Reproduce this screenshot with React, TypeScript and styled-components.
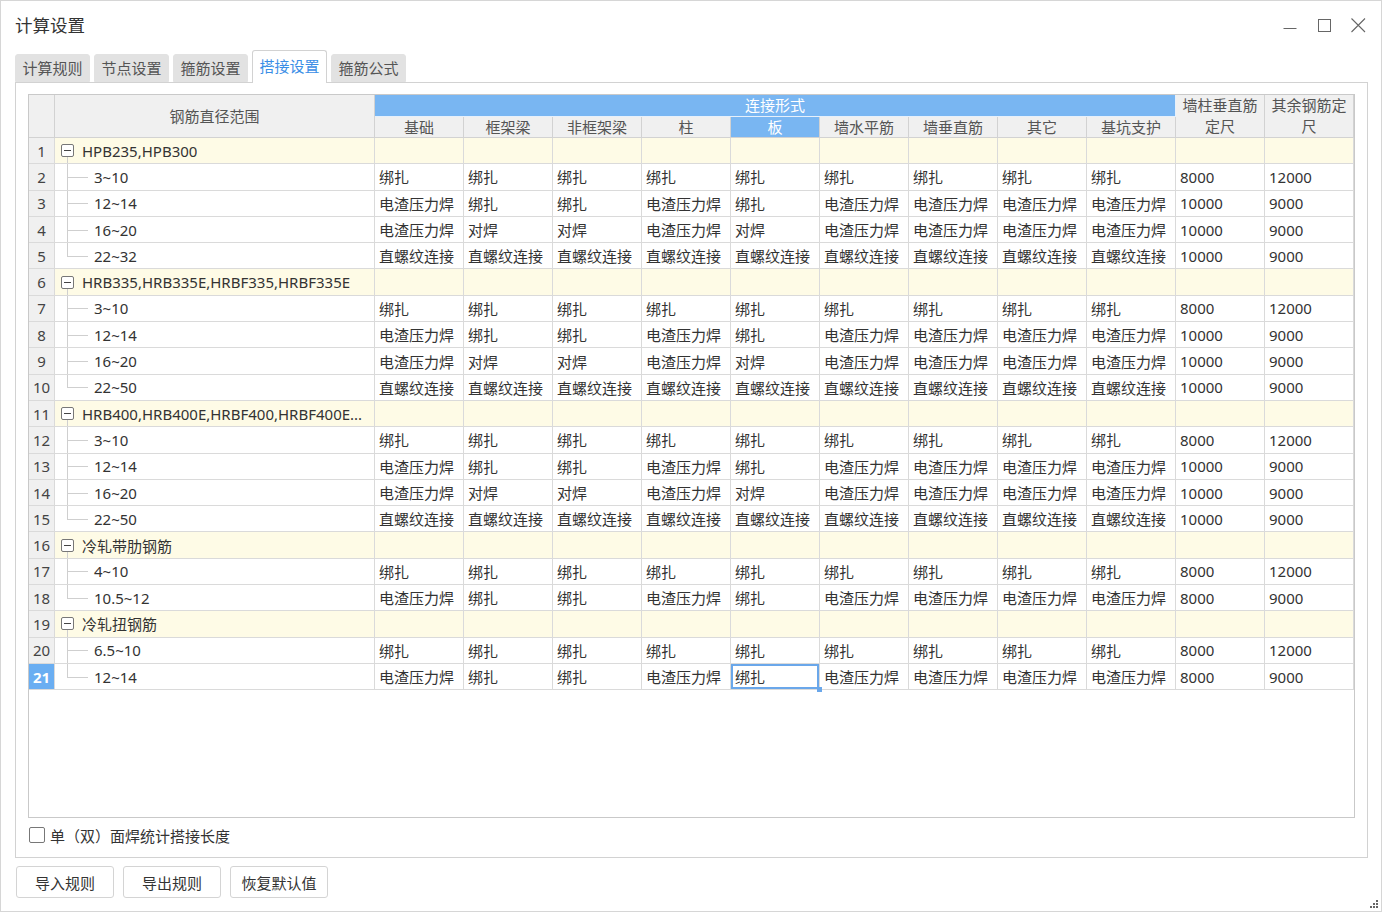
import React from 'react';
import styled, { createGlobalStyle, css } from 'styled-components';

const GlobalStyle = createGlobalStyle`
  html, body { margin: 0; padding: 0; background: #fff; }
  body {
    font-family: "Noto Sans", "Noto Sans CJK SC", sans-serif;
    color: #333;
  }
  * { box-sizing: border-box; }
`;

const B = '绑扎';
const E = '电渣压力焊';
const D = '对焊';
const Z = '直螺纹连接';

const patterns: Record<string, string[]> = {
  A: [B, B, B, B, B, B, B, B, B],
  B: [E, B, B, E, B, E, E, E, E],
  C: [E, D, D, E, D, E, E, E, E],
  D: [Z, Z, Z, Z, Z, Z, Z, Z, Z],
};

type Item = [string, string, string, string];

const groups: { name: string; items: Item[] }[] = [
  {
    name: 'HPB235,HPB300',
    items: [
      ['3~10', 'A', '8000', '12000'],
      ['12~14', 'B', '10000', '9000'],
      ['16~20', 'C', '10000', '9000'],
      ['22~32', 'D', '10000', '9000'],
    ],
  },
  {
    name: 'HRB335,HRB335E,HRBF335,HRBF335E',
    items: [
      ['3~10', 'A', '8000', '12000'],
      ['12~14', 'B', '10000', '9000'],
      ['16~20', 'C', '10000', '9000'],
      ['22~50', 'D', '10000', '9000'],
    ],
  },
  {
    name: 'HRB400,HRB400E,HRBF400,HRBF400E...',
    items: [
      ['3~10', 'A', '8000', '12000'],
      ['12~14', 'B', '10000', '9000'],
      ['16~20', 'C', '10000', '9000'],
      ['22~50', 'D', '10000', '9000'],
    ],
  },
  {
    name: '冷轧带肋钢筋',
    items: [
      ['4~10', 'A', '8000', '12000'],
      ['10.5~12', 'B', '8000', '9000'],
    ],
  },
  {
    name: '冷轧扭钢筋',
    items: [
      ['6.5~10', 'A', '8000', '12000'],
      ['12~14', 'B', '8000', '9000'],
    ],
  },
];

const subHeaders = ['基础', '框架梁', '非框架梁', '柱', '板', '墙水平筋', '墙垂直筋', '其它', '基坑支护'];

type Row =
  | { kind: 'group'; name: string }
  | { kind: 'item'; range: string; values: string[]; last: boolean };

const rows: Row[] = [];
groups.forEach((g) => {
  rows.push({ kind: 'group', name: g.name });
  g.items.forEach(([range, p, a, b], i) => {
    rows.push({ kind: 'item', range, values: [...patterns[p], a, b], last: i === g.items.length - 1 });
  });
});

const SELECTED_ROW = 21;
const SELECTED_COL = 4;

export default function App() {
  return (
    <Window>
      <GlobalStyle />
      <TitleBar>
        <Title>计算设置</Title>
        <Controls>
          <CtrlButton>
            <svg width="16" height="16" viewBox="0 0 16 16">
              <line x1="1.5" y1="11.5" x2="14.5" y2="11.5" stroke="#666" strokeWidth="1" />
            </svg>
          </CtrlButton>
          <CtrlButton>
            <svg width="16" height="16" viewBox="0 0 16 16">
              <rect x="2.5" y="2.5" width="12" height="12" fill="none" stroke="#666" strokeWidth="1" />
            </svg>
          </CtrlButton>
          <CtrlButton>
            <svg width="16" height="16" viewBox="0 0 16 16">
              <path d="M1.5 1.5 L15 15 M15 1.5 L1.5 15" stroke="#666" strokeWidth="1.1" />
            </svg>
          </CtrlButton>
        </Controls>
      </TitleBar>

      <Tabs>
        <Tab>计算规则</Tab>
        <Tab>节点设置</Tab>
        <Tab>箍筋设置</Tab>
        <Tab active>搭接设置</Tab>
        <Tab>箍筋公式</Tab>
      </Tabs>

      <Panel>
        <Table>
          <HeadCell style={{ gridRow: '1 / 3', gridColumn: '1' }} />
          <HeadCell style={{ gridRow: '1 / 3', gridColumn: '2' }}>钢筋直径范围</HeadCell>
          <GroupHead>连接形式</GroupHead>
          {subHeaders.map((h, i) => (
            <HeadCell key={h} selected={i === SELECTED_COL}>
              {h}
            </HeadCell>
          ))}
          <HeadCell style={{ gridRow: '1 / 3', gridColumn: '12' }}>
            墙柱垂直筋
            <br />
            定尺
          </HeadCell>
          <HeadCell style={{ gridRow: '1 / 3', gridColumn: '13' }}>
            其余钢筋定
            <br />尺
          </HeadCell>

          {rows.map((r, idx) => {
            const n = idx + 1;
            if (r.kind === 'group') {
              return (
                <React.Fragment key={n}>
                  <NumCell>{n}</NumCell>
                  <NameCell group>
                    <Toggle />
                    <GroupName>{r.name}</GroupName>
                  </NameCell>
                  {Array.from({ length: 11 }).map((_, c) => (
                    <Cell key={c} group />
                  ))}
                </React.Fragment>
              );
            }
            return (
              <React.Fragment key={n}>
                <NumCell active={n === SELECTED_ROW}>{n}</NumCell>
                <NameCell last={r.last}>{r.range}</NameCell>
                {r.values.map((v, c) => (
                  <Cell key={c} selected={n === SELECTED_ROW && c === SELECTED_COL}>
                    {v}
                  </Cell>
                ))}
              </React.Fragment>
            );
          })}
        </Table>

        <CheckRow>
          <CheckBox />
          <span>单（双）面焊统计搭接长度</span>
        </CheckRow>
      </Panel>

      <Buttons>
        <Button>导入规则</Button>
        <Button>导出规则</Button>
        <Button>恢复默认值</Button>
      </Buttons>

      <Grip>
        <svg width="10" height="10" viewBox="0 0 10 10">
          {[
            [8, 2],
            [5, 5],
            [8, 5],
            [2, 8],
            [5, 8],
            [8, 8],
          ].map(([x, y]) => (
            <rect key={`${x}-${y}`} x={x - 1} y={y - 1} width="2" height="2" fill="#666" />
          ))}
        </svg>
      </Grip>
    </Window>
  );
}

const Window = styled.div`
  position: relative;
  width: 1382px;
  height: 912px;
  border: 1px solid #d6d6d6;
  background: #fff;
  display: flex;
  flex-direction: column;
  overflow: hidden;
`;

const TitleBar = styled.div`
  height: 49px;
  flex: none;
  display: flex;
  align-items: center;
  justify-content: space-between;
  padding: 0 6px 0 14px;
`;

const Title = styled.div`
  font-size: 17.5px;
  color: #333;
  margin-top: -2px;
`;

const Controls = styled.div`
  display: flex;
  align-items: center;
  margin-top: -2px;
`;

const CtrlButton = styled.div`
  width: 34px;
  height: 30px;
  display: flex;
  align-items: center;
  justify-content: center;
`;

const Tabs = styled.div`
  height: 32px;
  flex: none;
  display: flex;
  align-items: flex-end;
  gap: 4px;
  padding-left: 14px;
  position: relative;
  z-index: 1;
`;

const Tab = styled.div<{ active?: boolean }>`
  height: ${({ active }) => (active ? '33px' : '28px')};
  margin-bottom: ${({ active }) => (active ? '-1px' : '0')};
  padding: 0 6.5px;
  display: flex;
  align-items: center;
  font-size: 15px;
  border-radius: 3px 3px 0 0;
  color: ${({ active }) => (active ? '#3a8ee6' : '#555')};
  background: ${({ active }) => (active ? '#fff' : '#e2e2e2')};
  border: 1px solid ${({ active }) => (active ? '#d2d2d2' : '#e2e2e2')};
  border-bottom: ${({ active }) => (active ? 'none' : '1px solid #e2e2e2')};
  padding-bottom: ${({ active }) => (active ? '3px' : '1px')};
`;

const Panel = styled.div`
  flex: 1;
  min-height: 0;
  margin: 0 13px 0 14px;
  border: 1px solid #d2d2d2;
  padding: 11px 12px 14px 12px;
  display: flex;
  flex-direction: column;
`;

const Table = styled.div`
  flex: 1;
  min-height: 0;
  border: 1px solid #c9c9c9;
  display: grid;
  grid-template-columns: 26px 320px repeat(11, 89px);
  grid-template-rows: 22px 21px repeat(21, 26.3px) 1fr;
  font-size: 15px;
  overflow: hidden;
`;

const baseCell = css`
  border-right: 1px solid #dadada;
  border-bottom: 1px solid #dadada;
  display: flex;
  align-items: center;
  white-space: nowrap;
  overflow: hidden;
`;

const HeadCell = styled.div<{ selected?: boolean }>`
  ${baseCell};
  border-color: #d2d2d2;
  justify-content: center;
  text-align: center;
  line-height: 21px;
  color: ${({ selected }) => (selected ? '#fff' : '#555')};
  background: ${({ selected }) => (selected ? '#79b6f2' : '#f0f0f0')};
`;

const GroupHead = styled.div`
  ${baseCell};
  grid-column: 3 / 12;
  grid-row: 1;
  border-color: #e6f0fb;
  justify-content: center;
  padding-bottom: 2px;
  color: #fff;
  background: #79b6f2;
`;

const NumCell = styled.div<{ active?: boolean }>`
  ${baseCell};
  justify-content: center;
  color: ${({ active }) => (active ? '#fff' : '#444')};
  font-weight: ${({ active }) => (active ? 700 : 400)};
  background: ${({ active }) => (active ? '#6aaef2' : '#f0f0f0')};
`;

const NameCell = styled.div<{ group?: boolean; last?: boolean }>`
  ${baseCell};
  position: relative;
  padding-left: ${({ group }) => (group ? '6px' : '39px')};
  padding-right: 4px;
  color: #333;
  background: ${({ group }) => (group ? '#fefbe6' : '#fff')};

  &::before {
    content: '';
    position: absolute;
    left: 12px;
    width: 1px;
    background: #cfcfcf;
    top: ${({ group }) => (group ? '19px' : '0')};
    bottom: ${({ last }) => (last ? '50%' : '0')};
  }

  &::after {
    content: ${({ group }) => (group ? 'none' : "''")};
    position: absolute;
    left: 12px;
    width: 21px;
    top: 50%;
    height: 1px;
    background: #cfcfcf;
  }
`;

const Toggle = styled.span`
  position: relative;
  flex: none;
  width: 13px;
  height: 13px;
  border: 1px solid #777;
  border-radius: 2px;
  background: #fff;
  margin-right: 8px;

  &::after {
    content: '';
    position: absolute;
    left: 2px;
    right: 2px;
    top: 5px;
    height: 1px;
    background: #444;
  }
`;

const GroupName = styled.span`
  min-width: 0;
  overflow: hidden;
  text-overflow: ellipsis;
  white-space: nowrap;
`;

const Cell = styled.div<{ group?: boolean; selected?: boolean }>`
  ${baseCell};
  position: relative;
  padding-left: 4px;
  color: #333;
  background: ${({ group }) => (group ? '#fefbe6' : '#fff')};
  overflow: visible;

  ${({ selected }) =>
    selected &&
    css`
      box-shadow: inset 0 0 0 2px #6aa7ea;
      &::after {
        content: '';
        position: absolute;
        right: -3px;
        bottom: -3px;
        width: 5px;
        height: 5px;
        background: #6aa7ea;
        z-index: 1;
      }
    `}
`;

const CheckRow = styled.div`
  flex: none;
  display: flex;
  align-items: center;
  gap: 5px;
  margin-top: 9px;
  padding-left: 1px;
  height: 16px;
  font-size: 15px;
  color: #333;
`;

const CheckBox = styled.span`
  width: 16px;
  height: 16px;
  border: 1px solid #777;
  border-radius: 2px;
  background: #fff;
`;

const Buttons = styled.div`
  flex: none;
  display: flex;
  gap: 9px;
  margin: 8px 0 13px 15px;
`;

const Button = styled.div`
  width: 98px;
  height: 32px;
  display: flex;
  align-items: center;
  justify-content: center;
  border: 1px solid #d4d4d4;
  border-radius: 3px;
  background: #fff;
  font-size: 15px;
  color: #333;
`;

const Grip = styled.div`
  position: absolute;
  right: 2px;
  bottom: 2px;
  width: 10px;
  height: 10px;
  display: flex;
`;
